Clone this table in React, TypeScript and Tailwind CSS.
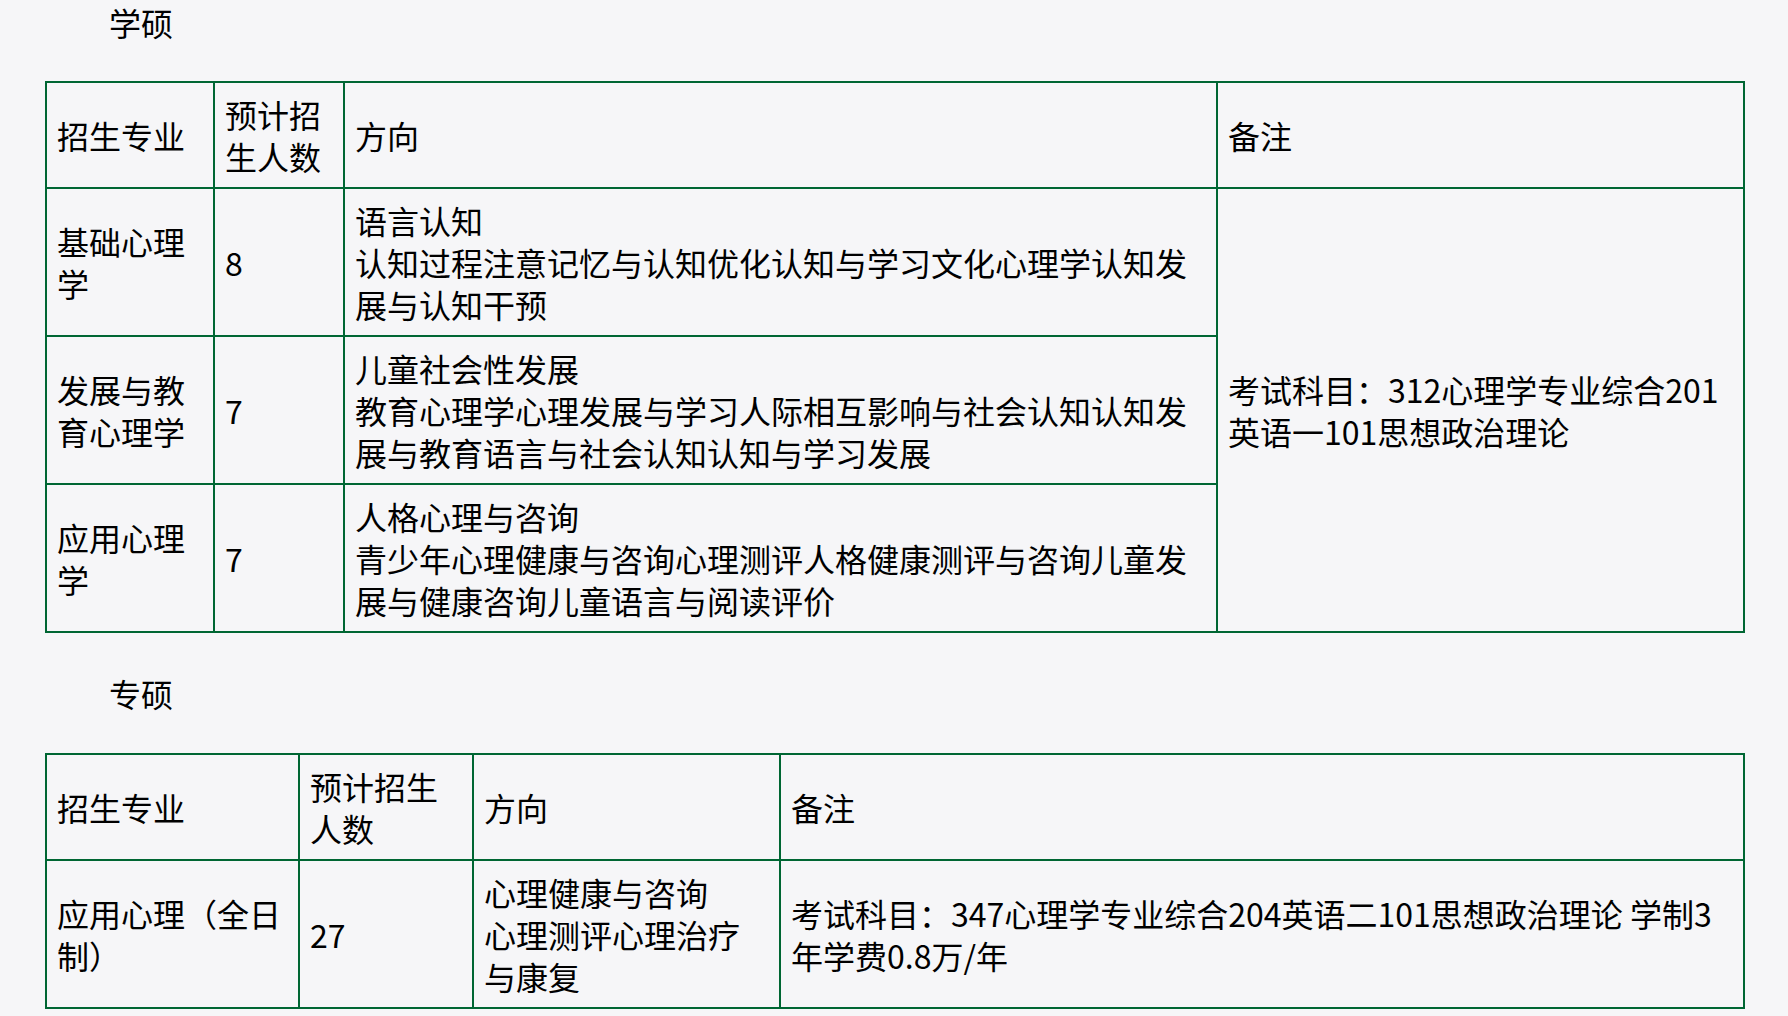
import React from "react";

type Row = { major: string; count: string; lead: string; rest: string };

const xueshuoRows: Row[] = [
  {
    major: "基础心理学",
    count: "8",
    lead: "语言认知",
    rest: "认知过程注意记忆与认知优化认知与学习文化心理学认知发展与认知干预",
  },
  {
    major: "发展与教育心理学",
    count: "7",
    lead: "儿童社会性发展",
    rest: "教育心理学心理发展与学习人际相互影响与社会认知认知发展与教育语言与社会认知认知与学习发展",
  },
  {
    major: "应用心理学",
    count: "7",
    lead: "人格心理与咨询",
    rest: "青少年心理健康与咨询心理测评人格健康测评与咨询儿童发展与健康咨询儿童语言与阅读评价",
  },
];

const cell = "border-2 border-[#006633] px-[10px] py-[10px] align-middle text-left font-normal";

const SectionTitle = ({ children }: { children: React.ReactNode }) => (
  <p className="indent-[64px]">{children}</p>
);

const App = () => {
  return (
    <div
      className="min-h-screen bg-[#f6f6f8] px-[45px] pt-[1px] text-[32px] leading-[42px] text-[#000]"
      style={{ fontFamily: '"Noto Sans CJK SC", "Noto Sans", sans-serif' }}
    >
      <SectionTitle>学硕</SectionTitle>

      <table className="mt-[38px] w-[1698px] table-fixed border-collapse">
        <colgroup>
          <col className="w-[168px]" />
          <col className="w-[130px]" />
          <col className="w-[873px]" />
          <col className="w-[527px]" />
        </colgroup>
        <thead>
          <tr>
            <th className={cell}>招生专业</th>
            <th className={cell}>预计招生人数</th>
            <th className={cell}>方向</th>
            <th className={cell}>备注</th>
          </tr>
        </thead>
        <tbody>
          {xueshuoRows.map((r, i) => (
            <tr key={r.major}>
              <td className={cell}>{r.major}</td>
              <td className={cell}>{r.count}</td>
              <td className={cell}>
                {r.lead}
                <br />
                {r.rest}
              </td>
              {i === 0 && (
                <td className={cell} rowSpan={3}>
                  考试科目：312心理学专业综合201英语一101思想政治理论
                </td>
              )}
            </tr>
          ))}
        </tbody>
      </table>

      <div className="mt-[39px]">
        <SectionTitle>专硕</SectionTitle>
      </div>

      <table className="mt-[39px] w-[1698px] table-fixed border-collapse">
        <colgroup>
          <col className="w-[253px]" />
          <col className="w-[174px]" />
          <col className="w-[307px]" />
          <col className="w-[964px]" />
        </colgroup>
        <thead>
          <tr>
            <th className={cell}>招生专业</th>
            <th className={cell}>预计招生人数</th>
            <th className={cell}>方向</th>
            <th className={cell}>备注</th>
          </tr>
        </thead>
        <tbody>
          <tr>
            <td className={cell}>应用心理（全日制）</td>
            <td className={cell}>27</td>
            <td className={cell}>
              心理健康与咨询
              <br />
              心理测评心理治疗与康复
            </td>
            <td className={cell}>
              考试科目：347心理学专业综合204英语二101思想政治理论 学制3年学费0.8万/年
            </td>
          </tr>
        </tbody>
      </table>
    </div>
  );
};

export default App;
